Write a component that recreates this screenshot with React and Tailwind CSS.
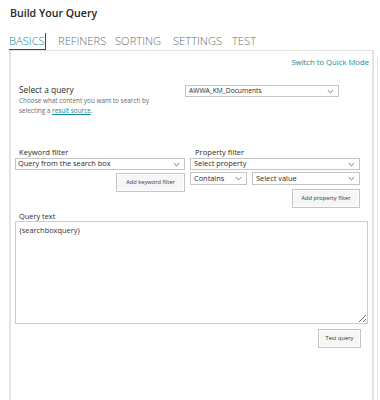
import React from "react";

const Chevron = () => (
  <svg width="7" height="5" viewBox="0 0 7 5" className="shrink-0">
    <path d="M0.8 1.2 L3.5 3.8 L6.2 1.2" fill="none" stroke="#666" strokeWidth="0.9" />
  </svg>
);

const Select = ({ label, className }) => (
  <div
    className={
      "flex items-center justify-between border border-[#c4c4c4] bg-white pl-[2px] pr-[4px] leading-none text-[#2a2a2a] " +
      className
    }
  >
    <span className="whitespace-nowrap">{label}</span>
    <Chevron />
  </div>
);

const Button = ({ label, className }) => (
  <div
    className={
      "flex items-center justify-center whitespace-nowrap border border-[#c4c4c4] bg-[#f6f6f6] shadow-[inset_0_0_0_1px_#ffffff] text-[5.7px] leading-none text-[#333] " +
      className
    }
  >
    {label}
  </div>
);

export default function App() {
  return (
    <div
      className="relative h-[400px] w-[380px] overflow-hidden bg-white"
      style={{ fontFamily: '"Open Sans", "Noto Sans", sans-serif' }}
    >
      <div className="pl-[10px] pt-[5px] text-[10.6px] font-semibold leading-[16px] text-[#252525]">
        Build Your Query
      </div>
      <div className="mt-[12px] flex h-[17px] pl-[9px] text-[11.2px] font-light leading-[16px] text-[#6e6e6e]">
        <div className="w-[37px] border-b border-r border-[#444] text-[#138a96]">BASICS</div>
        <div className="ml-[12px] w-[57px]">REFINERS</div>
        <div className="w-[58px]">SORTING</div>
        <div className="w-[59px]">SETTINGS</div>
        <div>TEST</div>
      </div>
      <div className="absolute right-[2px] top-[57px] h-[350px] w-px bg-[#e2e2e2]" />
      <div className="ml-[9px] flex h-[360px] w-[365px] flex-col border-2 border-t border-[#e4e4e4] pb-2">
        <div className="mt-[5px] flex justify-end pr-[3px] text-[7.7px] leading-[12px] text-[#138a96]">
          Switch to Quick Mode
        </div>
        <div className="mt-[16px] flex">
          <div className="w-[174px] pl-[8px]">
            <div className="text-[8.4px] leading-[12px] text-[#2a2a2a]">Select a query</div>
            <div className="whitespace-nowrap text-[6.4px] leading-[10px] text-[#6a6a6a]">
              Choose what content you want to search by
              <br />
              selecting a{" "}
              <span className="text-[#138a96] underline">result source</span>.
            </div>
          </div>
          <Select label="AWWA_KM_Documents" className="mt-[1px] h-[12px] w-[154px] pl-[3px] text-[6.7px]" />
        </div>
        <div className="mt-[31px] flex pl-[4px]">
          <div className="flex w-[170px] flex-col">
            <div className="pl-[4px] text-[7.6px] leading-[11px] text-[#2a2a2a]">Keyword filter</div>
            <Select label="Query from the search box" className="h-[12px] w-[170px] text-[7.4px]" />
            <Button label="Add keyword filter" className="mt-[3px] h-[19px] w-[69px] self-end" />
          </div>
          <div className="ml-[5px] flex w-[171px] flex-col">
            <div className="pl-[5px] text-[7.6px] leading-[11px] text-[#2a2a2a]">Property filter</div>
            <Select label="Select property" className="h-[12px] w-[170px] pl-[3px] text-[7.4px]" />
            <div className="mt-[2px] flex gap-[5px]">
              <Select label="Contains" className="h-[13px] w-[57px] pl-[3px] text-[7.4px]" />
              <Select label="Select value" className="h-[13px] w-[108px] pl-[3px] text-[7.4px]" />
            </div>
            <Button label="Add property filter" className="mt-[4px] mr-[1px] h-[19px] w-[68px] self-end" />
          </div>
        </div>
        <div className="mt-[3px] pl-[8px] text-[7.4px] leading-[10px] text-[#2a2a2a]">Query text</div>
        <textarea
          readOnly
          defaultValue="{searchboxquery}"
          className="ml-[4px] h-[103px] w-[353px] border border-[#cccccc] px-[3px] py-[3px] text-[7.4px] leading-[11px] text-[#333] outline-none"
        />
        <Button label="Test query" className="mr-[11px] mt-[5px] h-[19px] w-[43px] self-end" />
      </div>
    </div>
  );
}
